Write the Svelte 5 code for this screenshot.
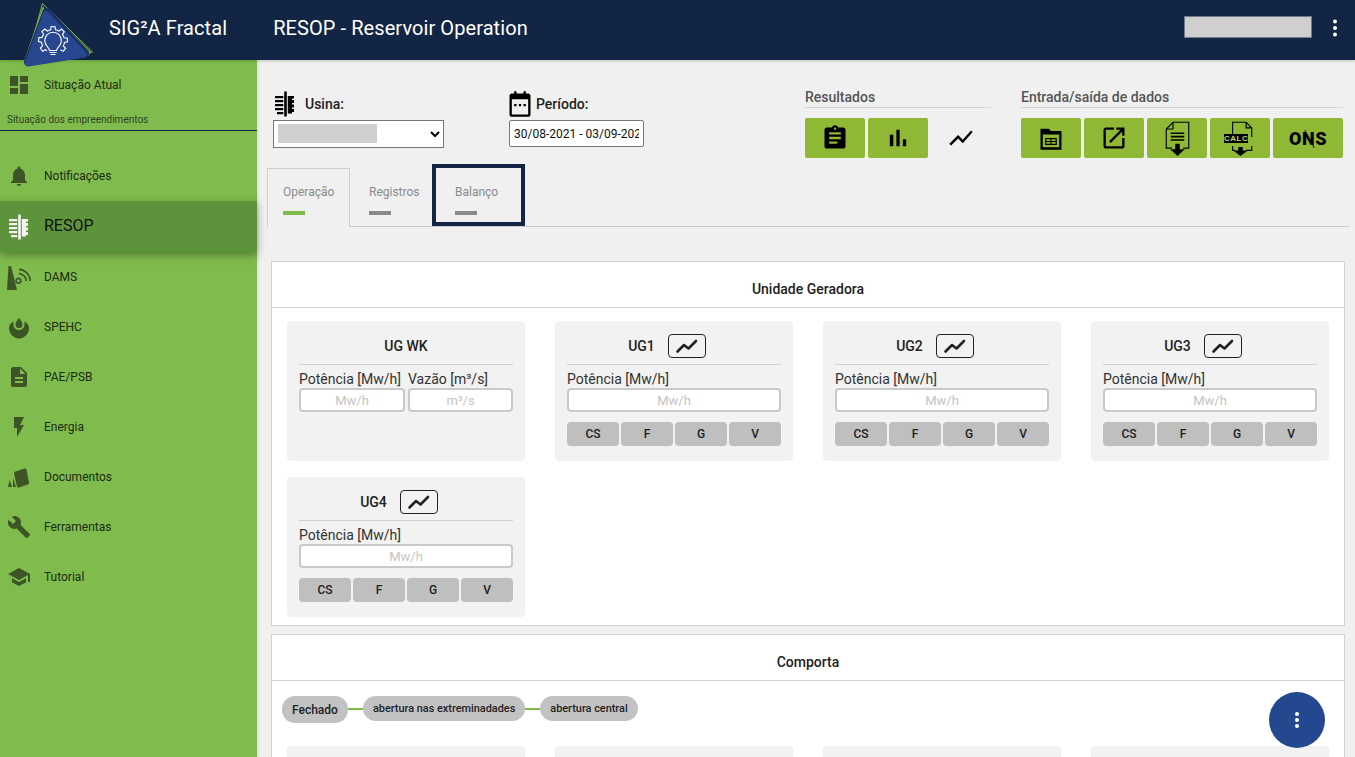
<script lang="ts">
  const icons = {
    dashboard: "M3 13h8V3H3v10zm0 8h8v-6H3v6zm10 0h8V11h-8v10zm0-18v6h8V3h-8z",
    bell: "M12 22c1.1 0 2-.9 2-2h-4c0 1.1.9 2 2 2zm6-6v-5c0-3.07-1.63-5.64-4.5-6.32V4c0-.83-.67-1.5-1.5-1.5s-1.5.67-1.5 1.5v.68C7.64 5.36 6 7.92 6 11v5l-2 2v1h16v-1l-2-2z",
    doc: "M14 2H6c-1.1 0-1.99.9-1.99 2L4 20c0 1.1.89 2 1.99 2H18c1.1 0 2-.9 2-2V8l-6-6zm2 16H8v-2h8v2zm0-4H8v-2h8v2zm-3-5V3.5L18.5 9H13z",
    flash: "M7 2v11h3v9l7-12h-4l4-8z",
    wrench: "M22.7 19l-9.1-9.1c.9-2.3.4-5-1.5-6.9-2-2-5-2.4-7.4-1.3L9 6 6 9 1.6 4.7C.4 7.1.9 10.1 2.9 12.1c1.9 1.9 4.6 2.4 6.9 1.5l9.1 9.1c.4.4 1 .4 1.4 0l2.3-2.3c.5-.4.5-1.1.1-1.4z",
    school: "M5 13.18v4L12 21l7-3.82v-4L12 17l-7-3.82zM12 3L1 9l11 6 9-4.91V17h2V9L12 3z",
    comb: "M11.2 -0.500h2.600v25h-2.600zM2 4h8.300v2.200H2zM2 8h8.300v2.200H2zM2 12h8.300v2.200H2zM2 16h8.300v2.200H2zM4 20h6.300v2.200H4zM14.800 4H21v2.500h-2V8h2v3h-2v1.500h2v3h-2V17h2v3h-2v1.500h-4.200z",
    dams: "M1.500 1h2.500L10 25H0zM11.500 12.500a3.300 3.300 0 1 1-.01 0zM11.500 14.200a1.600 1.600 0 1 0 .01 0zM12 7.800a8.300 8.300 0 0 1 8 8.200h-1.600a6.700 6.700 0 0 0-6.400-6.600zM12 3.600a12.500 12.500 0 0 1 12 12.400h-1.600a10.900 10.900 0 0 0-10.400-10.800z",
    spehc: "M12 3c2 2.600 3.500 4.500 3.500 6.500a3.500 3.500 0 0 1-7 0C8.500 7.500 10 5.600 12 3zM6.500 6.500v3a5.500 5.500 0 0 0 11 0v-3c3 1.500 4.500 4 4.500 7a10 10 0 0 1-20 0c0-3 1.500-5.500 4.500-7z",
    docs: "M8.500 6.500 17.500 3.500Q19 3 19.500 4.500L22 17.500Q22.300 19 21 19.500L12 22.500Q10.500 23 10 21.500L7 8.500Q6.800 7 8.500 6.500zM6 13l3 9H6zM2.800 15 5 22H1z",
    clipboard: "M19 3h-4.180C14.400 1.840 13.300 1 12 1c-1.300 0-2.400.840-2.820 2H5c-1.100 0-2 .900-2 2v14c0 1.100.900 2 2 2h14c1.100 0 2-.900 2-2V5c0-1.100-.900-2-2-2zm-7 0c.550 0 1 .450 1 1s-.450 1-1 1-1-.450-1-1 .450-1 1-1zm2 14H7v-2h7v2zm3-4H7v-2h10v2zm0-4H7V7h10v2z",
    bars: "M5 9.200h3V19H5zM10.600 5h2.800v14h-2.800zm5.600 8H19v6h-2.800z",
    chart: "M3.500 18.490l6-6.010 4 4L22 6.920l-1.410-1.410-7.090 7.970-4-4L2 16.990z",
    open: "M19 19H5V5h7V3H5c-1.110 0-2 .900-2 2v14c0 1.100.890 2 2 2h14c1.100 0 2-.900 2-2v-7h-2v7zM14 3v2h3.590l-9.830 9.830 1.410 1.410L19 6.410V10h2V3h-7z",
    calendar: "M7 1h2v2h6V1h2v2h2c1.100 0 2 .900 2 2v16c0 1.100-.900 2-2 2H5c-1.100 0-2-.900-2-2V5c0-1.100.900-2 2-2h2zM5 8v13h14V8zM7 12h2v2H7zM11 12h2v2h-2zM15 12h2v2h-2z",
    sheet: "M3 4h7l2 2h9v16H3zM5 9v11h14V9zM7 12h10v6H7zM8 13v1.500h3.500V13zM12.500 13v1.500H16V13zM8 15.500V17h3.500v-1.500zM12.500 15.500V17H16v-1.500z"
  };

  const menu = [
    { label: "Notificações", icon: icons.bell },
    { label: "RESOP", icon: icons.comb, active: true },
    { label: "DAMS", icon: icons.dams },
    { label: "SPEHC", icon: icons.spehc },
    { label: "PAE/PSB", icon: icons.doc },
    { label: "Energia", icon: icons.flash },
    { label: "Documentos", icon: icons.docs },
    { label: "Ferramentas", icon: icons.wrench },
    { label: "Tutorial", icon: icons.school }
  ];

  const units = ["UG1", "UG2", "UG3", "UG4"];
  const modes = ["CS", "F", "G", "V"];

  // gear outline for the logo, left open at the bottom where the bulb sits
  function gearPath(cx: number, cy: number) {
    const pts: string[] = [];
    for (let tooth = 0; tooth < 7; tooth++) {
      const a = 122 + tooth * 42.500;
      const steps: [number, number][] = [[a, 11.500], [a + 9, 11.500], [a + 13, 14.500], [a + 29, 14.500], [a + 33, 11.500]];
      for (const [deg, r] of steps) {
        const rad = (deg * Math.PI) / 180;
        pts.push(`${(cx + r * Math.cos(rad)).toFixed(1)} ${(cy + r * Math.sin(rad)).toFixed(1)}`);
      }
    }
    return "M" + pts.join("L");
  }
</script>

<div class="app">
  <header class="topbar">
    <svg class="logo" viewBox="0 0 96 74" aria-hidden="true">
      <path d="M42.500 3.500 92.500 52 24 71Z" fill="none" stroke="#79b845" stroke-width="1" stroke-linejoin="round" />
      <path d="M43 6 23 64 25 68 46 12ZM50 11 91 52 88 56Z" fill="#79b845" />
      <path d="M46.500 12 85 53 28 62Z" fill="#1b2f66" stroke="#1b2f66" stroke-width="8" stroke-linejoin="round" />
      <path d="M46 14 84 54.500 28 63.500Z" fill="#27478f" stroke="#27478f" stroke-width="6" stroke-linejoin="round" />
      <g fill="none" stroke="#fff" stroke-width="1.100">
        <path d={gearPath(53, 41)} />
        <path d="M49.500 50.500c-.2-2-1.200-2.800-2.400-4.100A8.300 8.300 0 1 1 59 46.400c-1.200 1.300-2.200 2.100-2.400 4.100z" />
        <path d="M49.500 52.500h7M50.500 54.500h5" />
      </g>
    </svg>
    <span class="brand">SIG²A Fractal</span>
    <span class="page-title">RESOP - Reservoir Operation</span>
    <div class="user-box"></div>
    <svg class="more" viewBox="0 0 24 24"><circle cx="12" cy="5.500" r="2" /><circle cx="12" cy="12" r="2" /><circle cx="12" cy="18.500" r="2" /></svg>
  </header>

  <div class="body">
    <nav class="sidebar">
      <a class="nav-item current">
        <svg viewBox="0 0 24 24"><path d={icons.dashboard} /></svg>
        <span>Situação Atual</span>
      </a>
      <div class="nav-caption">Situação dos empreendimentos</div>
      <div class="nav-list">
        {#each menu as item}
          <a class="nav-item" class:active={item.active}>
            <svg viewBox="0 0 24 24"><path d={item.icon} fill-rule="evenodd" /></svg>
            <span>{item.label}</span>
          </a>
        {/each}
      </div>
    </nav>

    <main class="main">
      <section class="toolbar">
        <div class="field usina">
          <label class="field-label">
            <svg viewBox="0 0 24 24"><path d={icons.comb} /></svg>
            Usina:
          </label>
          <div class="select-wrap">
            <select><option></option></select>
            <div class="redacted"></div>
          </div>
        </div>
        <div class="field periodo">
          <label class="field-label">
            <svg viewBox="0 0 24 24"><path d={icons.calendar} fill-rule="evenodd" /></svg>
            Período:
          </label>
          <input class="date" value="30/08-2021 - 03/09-2021" />
        </div>
        <div class="group resultados">
          <h4>Resultados</h4>
          <div class="buttons">
            <button class="tool"><svg viewBox="0 0 24 24"><path d={icons.clipboard} /></svg></button>
            <button class="tool"><svg viewBox="0 0 24 24"><path d={icons.bars} /></svg></button>
            <button class="tool flat"><svg viewBox="0 0 24 24"><path d={icons.chart} /></svg></button>
          </div>
        </div>
        <div class="group entrada">
          <h4>Entrada/saída de dados</h4>
          <div class="buttons">
            <button class="tool"><svg viewBox="0 0 24 24"><path d={icons.sheet} fill-rule="evenodd" /></svg></button>
            <button class="tool"><svg viewBox="0 0 24 24"><path d={icons.open} /></svg></button>
            <button class="tool">
              <svg class="file" viewBox="0 0 24 32">
                <path d="M7 25H2V8l6-6h14v23h-5M8 2v6H2" fill="none" stroke="#000" stroke-width="1" />
                <path d="M6 11h12v1.500H6zM6 14h12v1.500H6zM6 17h12v1.500H6zM10 21h4v5h4.500L12 32l-6.500-6H10z" />
              </svg>
            </button>
            <button class="tool calc">
              <svg class="file" viewBox="0 0 24 32">
                <path d="M5 15V2h12l5 5v8M22 7h-5V2M22 23v4h-5M7 27H5v-4" fill="none" stroke="#000" stroke-width="1" />
                <path d="M10 24h4v3h4.500L12 32l-6.500-5H10z" />
              </svg>
              <span class="calc-tag">CALC</span>
            </button>
            <button class="tool ons"><span>ONS</span></button>
          </div>
        </div>
      </section>

      <div class="tabs">
        <div class="tab selected">Operação<i></i></div>
        <div class="tab">Registros<i></i></div>
        <div class="tab focused">Balanço<i></i></div>
      </div>

      <section class="card">
        <h3>Unidade Geradora</h3>
        <div class="tiles">
          <div class="tile">
            <div class="tile-head"><b>UG WK</b></div>
            <div class="pair">
              <div>
                <label>Potência [Mw/h]</label>
                <input placeholder="Mw/h" />
              </div>
              <div>
                <label>Vazão [m³/s]</label>
                <input placeholder="m³/s" />
              </div>
            </div>
          </div>
          {#each units as unit}
            <div class="tile">
              <div class="tile-head with-chart">
                <b>{unit}</b>
                <button class="mini-chart">
                  <svg viewBox="0 0 24 24"><path d="M2.500 17.500 9 11l4.500 3.500L21 7" /></svg>
                </button>
              </div>
              <label>Potência [Mw/h]</label>
              <input placeholder="Mw/h" />
              <div class="modes">
                {#each modes as mode}
                  <button>{mode}</button>
                {/each}
              </div>
            </div>
          {/each}
        </div>
      </section>

      <section class="card">
        <h3>Comporta</h3>
        <div class="stepper">
          <span class="pill big">Fechado</span>
          <i></i>
          <span class="pill">abertura nas extreminadades</span>
          <i></i>
          <span class="pill">abertura central</span>
        </div>
        <div class="tiles">
          <div class="tile"></div>
          <div class="tile"></div>
          <div class="tile"></div>
          <div class="tile"></div>
        </div>
      </section>
    </main>
  </div>

  <button class="fab" aria-label="Mais opções">
    <svg viewBox="0 0 24 24"><circle cx="12" cy="6" r="2" /><circle cx="12" cy="12" r="2" /><circle cx="12" cy="18" r="2" /></svg>
  </button>
</div>

<style>
  :global(body) {
    margin: 0;
    font-family: Roboto, "Liberation Sans", sans-serif;
    background: #f0f0f0;
  }

  .app {
    position: relative;
    height: 757px;
    overflow: hidden;
    display: flex;
    flex-direction: column;
  }

  .topbar {
    position: relative;
    z-index: 3;
    flex: none;
    height: 60px;
    display: flex;
    align-items: center;
    background: #132545;
    color: #fff;
    box-shadow: 0 1px 3px rgba(0, 0, 0, 0.2);
  }

  .logo {
    position: absolute;
    left: 0;
    top: 0;
    width: 96px;
    height: 74px;
  }

  .brand {
    margin-left: 109px;
    margin-top: -4px;
    font-size: 20px;
    letter-spacing: 0.080px;
  }

  .page-title {
    margin-left: 46px;
    margin-top: -4px;
    font-size: 20px;
    letter-spacing: 0.080px;
  }

  .user-box {
    margin-left: auto;
    width: 126px;
    height: 20px;
    margin-top: -6px;
    background: #cfcfcf;
    border: 1px solid #6f7a8d;
  }

  .more {
    width: 24px;
    height: 24px;
    margin: -4px 8px 0 11px;
    fill: #fff;
  }

  .body {
    flex: 1;
    display: flex;
    min-height: 0;
  }

  .sidebar {
    flex: none;
    width: 257px;
    background: #7fbb4d;
    box-shadow: 1px 0 3px rgba(0, 0, 0, 0.12);
    position: relative;
    z-index: 1;
  }

  .nav-item {
    display: flex;
    align-items: center;
    height: 50px;
    color: #1d2b12;
    font-size: 12px;
  }

  .nav-item svg {
    flex: none;
    width: 24px;
    height: 24px;
    margin: 0 13px 0 7px;
    fill: #3d5426;
    overflow: visible;
  }

  .nav-caption {
    height: 21px;
    padding-left: 7px;
    margin-top: -1px;
    font-size: 10px;
    line-height: 22px;
    color: #2f4420;
    border-bottom: 1px solid #132545;
  }

  .nav-list {
    margin-top: 20px;
  }

  .nav-item.active {
    height: 51px;
    background: #5d933a;
    box-shadow: 0 3px 8px rgba(0, 0, 0, 0.35);
    font-size: 16px;
    color: #111;
    position: relative;
  }

  .nav-item.active span {
    margin-top: -2px;
  }

  .nav-item.active svg {
    fill: #f2f2f2;
  }

  .main {
    flex: 1;
    min-width: 0;
    overflow: hidden;
  }

  .toolbar {
    display: flex;
    align-items: flex-start;
    height: 108px;
    padding-left: 16px;
  }

  .field-label {
    display: flex;
    align-items: center;
    gap: 8px;
    height: 30px;
    font-size: 14px;
    font-weight: 500;
    color: #222;
  }

  .field-label svg {
    width: 24px;
    height: 24px;
    fill: #000;
    overflow: visible;
  }

  .usina {
    width: 171px;
    padding-top: 29px;
  }

  .periodo {
    width: 135px;
    margin-left: 65px;
    padding-top: 29px;
  }

  .periodo .field-label {
    gap: 2px;
  }

  .periodo .field-label svg {
    width: 28px;
    height: 28px;
    margin-left: -3px;
  }

  .select-wrap {
    position: relative;
    margin-top: 1px;
  }

  select {
    display: block;
    width: 171px;
    height: 28px;
    background: #fff;
    border: 1px solid #777;
    border-radius: 0;
    font-size: 13px;
  }

  .redacted {
    position: absolute;
    left: 5px;
    top: 4px;
    width: 99px;
    height: 19px;
    background: #cfcfcf;
  }

  .date {
    box-sizing: border-box;
    display: block;
    width: 135px;
    height: 27px;
    margin-top: 1px;
    padding: 0 4px;
    background: #fff;
    border: 1px solid #777;
    border-radius: 2px;
    font-family: Roboto, sans-serif;
    font-size: 12px;
    color: #111;
  }

  .group {
    padding-top: 29px;
  }

  .group h4 {
    margin: 0 0 10px;
    height: 18px;
    font-size: 14px;
    font-weight: 500;
    line-height: 17px;
    color: #555;
    border-bottom: 1px solid #d5d5d5;
  }

  .resultados {
    width: 186px;
    margin-left: 161px;
  }

  .entrada {
    width: 322px;
    margin-left: 30px;
  }

  .buttons {
    display: flex;
    gap: 3px;
  }

  .tool {
    position: relative;
    width: 60px;
    height: 40px;
    padding: 0;
    display: flex;
    align-items: center;
    justify-content: center;
    background: #8fb935;
    border: 0;
    border-radius: 2px;
  }

  .tool svg {
    width: 28px;
    height: 28px;
    fill: #000;
  }

  .tool svg.file {
    width: 27px;
    height: 36px;
  }

  .tool.flat {
    background: transparent;
  }

  .calc-tag {
    position: absolute;
    left: 14px;
    top: 16px;
    width: 24px;
    background: #000;
    color: #b9d178;
    font-size: 8px;
    font-weight: 900;
    line-height: 9px;
    letter-spacing: 0.500px;
    text-align: center;
  }

  .tool.ons {
    width: 70px;
    font-family: Roboto, sans-serif;
    font-size: 18px;
    font-weight: 900;
    letter-spacing: 0.500px;
    color: #000;
  }

  .tool.ons::after {
    content: "";
    position: absolute;
    left: 36px;
    top: 11px;
    width: 1px;
    height: 20px;
    background: #111;
    transform: rotate(-28deg);
  }

  .tabs {
    display: flex;
    align-items: stretch;
    height: 58px;
    margin: 0 6px 0 10px;
    border-bottom: 1px solid #c9c9c9;
    font-size: 12px;
    color: #8a8a8a;
  }

  .tab {
    position: relative;
    box-sizing: border-box;
    width: 83px;
    padding: 18px 0 0 16px;
    line-height: 12px;
  }

  .tab i {
    display: block;
    width: 22px;
    height: 4px;
    margin-top: 13px;
    background: #8a8a8a;
  }

  .tab.selected {
    border: 1px solid #cfcfcf;
    border-bottom: 0;
    padding-left: 15px;
    padding-top: 17px;
    margin-bottom: -1px;
    background: #f0f0f0;
  }

  .tab.selected i {
    background: #7fbb4d;
  }

  .tab:nth-child(2) {
    width: 82px;
    padding-left: 19px;
  }

  .tab.focused {
    width: 93px;
    padding-left: 23px;
    outline: 4px solid #132545;
    outline-offset: -4px;
    margin-top: -4px;
    padding-top: 22px;
    border: 0;
  }

  .card {
    margin: 34px 10px 0 14px;
    background: #fff;
    border: 1px solid #d2d2d2;
  }

  .card + .card {
    margin-top: 8px;
  }

  .card h3 {
    margin: 0;
    height: 45px;
    font-size: 14px;
    font-weight: 500;
    line-height: 54px;
    text-align: center;
    color: #222;
    border-bottom: 1px solid #d2d2d2;
  }

  .tiles {
    display: grid;
    grid-template-columns: repeat(4, 238px);
    column-gap: 30px;
    row-gap: 16px;
    padding: 13px 15px 8px;
  }

  .tile {
    box-sizing: border-box;
    height: 140px;
    padding: 0 12px;
    background: #f2f2f2;
    border-radius: 4px;
    font-size: 14px;
    color: #333;
  }

  .tile-head {
    box-sizing: border-box;
    height: 44px;
    padding-top: 6px;
    display: flex;
    align-items: center;
    justify-content: center;
    gap: 13px;
    border-bottom: 1px solid #d0d0d0;
    color: #222;
    font-size: 14px;
  }

  .tile-head.with-chart {
    padding-right: 14px;
  }

  .tile-head b {
    font-weight: 500;
  }

  .mini-chart {
    width: 38px;
    height: 24px;
    padding: 0;
    display: flex;
    align-items: center;
    justify-content: center;
    background: transparent;
    border: 1px solid #222;
    border-radius: 4px;
  }

  .mini-chart svg {
    width: 24px;
    height: 24px;
    fill: none;
    stroke: #222;
    stroke-width: 2.600;
    stroke-linecap: round;
    stroke-linejoin: round;
  }

  .tile label {
    display: block;
    margin-top: 6px;
    height: 17px;
    line-height: 17px;
  }

  .tile input {
    box-sizing: border-box;
    display: block;
    width: 100%;
    height: 24px;
    padding: 0;
    background: #fff;
    border: 2px solid #c9c9c9;
    border-radius: 4px;
    text-align: center;
    font-family: Roboto, sans-serif;
    font-size: 13px;
  }

  .tile input::placeholder {
    color: #c4c4c4;
  }

  .pair {
    display: grid;
    grid-template-columns: 106px 105px;
    gap: 3px;
  }

  .modes {
    display: grid;
    grid-template-columns: repeat(4, 52px);
    gap: 2px;
    margin-top: 10px;
  }

  .modes button {
    height: 24px;
    padding: 0;
    background: #bfbfbf;
    border: 0;
    border-radius: 4px;
    font-family: Roboto, sans-serif;
    font-size: 12px;
    font-weight: 500;
    color: #222;
  }

  .stepper {
    display: flex;
    align-items: flex-start;
    padding: 15px 0 0 10px;
    height: 50px;
  }

  .stepper i {
    width: 15px;
    height: 2px;
    margin-top: 12px;
    background: #7fbb4d;
  }

  .pill {
    height: 25px;
    padding: 0 10px;
    border-radius: 13px;
    background: #c2c2c2;
    font-size: 10.900px;
    font-weight: 500;
    line-height: 26px;
    color: #222;
  }

  .pill.big {
    height: 27px;
    font-size: 12px;
    line-height: 28px;
  }

  .stepper + .tiles {
    padding-top: 0;
  }

  .fab {
    position: absolute;
    right: 30px;
    bottom: 9px;
    z-index: 4;
    width: 56px;
    height: 56px;
    padding: 16px;
    background: #23488f;
    border: 0;
    border-radius: 50%;
  }

  .fab svg {
    display: block;
    width: 24px;
    height: 24px;
    fill: #fff;
  }
</style>
